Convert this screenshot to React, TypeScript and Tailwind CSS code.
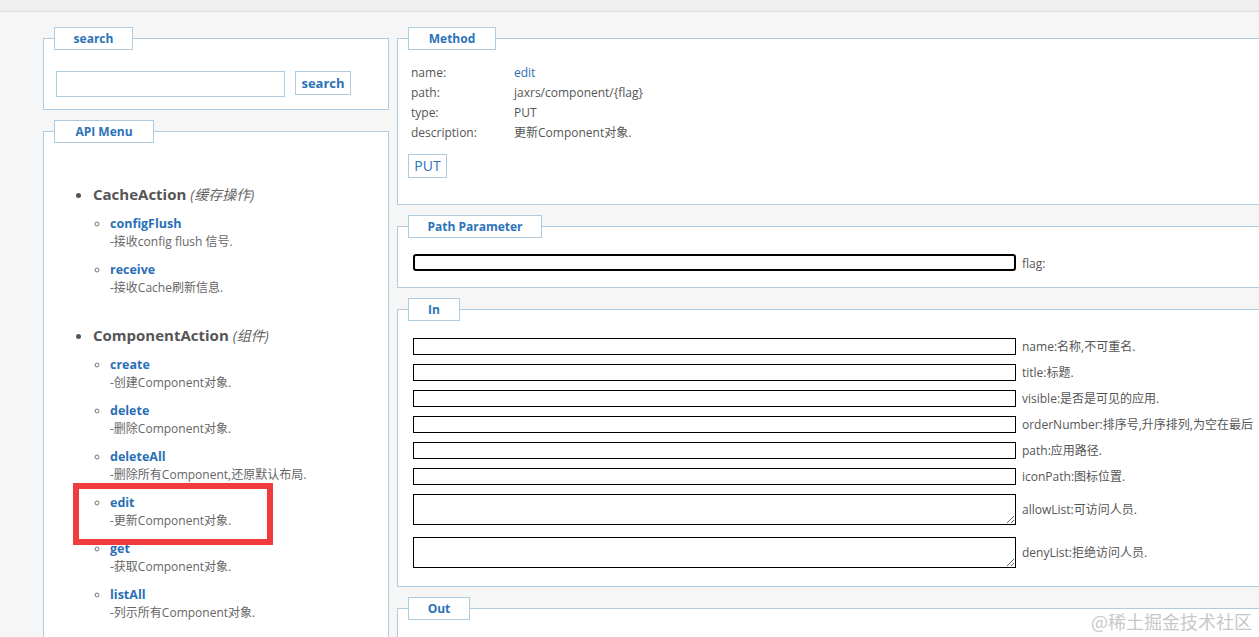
import React from "react";

const groups = [
  {
    name: "CacheAction",
    note: "(缓存操作)",
    items: [
      { name: "configFlush", desc: "-接收config flush 信号." },
      { name: "receive", desc: "-接收Cache刷新信息." },
    ],
  },
  {
    name: "ComponentAction",
    note: "(组件)",
    items: [
      { name: "create", desc: "-创建Component对象." },
      { name: "delete", desc: "-删除Component对象." },
      { name: "deleteAll", desc: "-删除所有Component,还原默认布局." },
      { name: "edit", desc: "-更新Component对象." },
      { name: "get", desc: "-获取Component对象." },
      { name: "listAll", desc: "-列示所有Component对象." },
    ],
  },
];

const methodRows = [
  { label: "name:", value: "edit", link: true },
  { label: "path:", value: "jaxrs/component/{flag}" },
  { label: "type:", value: "PUT" },
  { label: "description:", value: "更新Component对象." },
];

const inFields = [
  { label: "name:名称,不可重名.", area: false },
  { label: "title:标题.", area: false },
  { label: "visible:是否是可见的应用.", area: false },
  { label: "orderNumber:排序号,升序排列,为空在最后", area: false },
  { label: "path:应用路径.", area: false },
  { label: "iconPath:图标位置.", area: false },
  { label: "allowList:可访问人员.", area: true },
  { label: "denyList:拒绝访问人员.", area: true },
];

function Box({
  title,
  legendW,
  className,
  children,
}: {
  title: string;
  legendW: string;
  className?: string;
  children: React.ReactNode;
}) {
  return (
    <fieldset className={`border border-[#aecbe0] bg-white px-[10px] ${className ?? ""}`}>
      <legend className="border border-[#aecbe0] bg-white">
        <span
          className={`block h-[21px] text-center text-[12px] font-bold leading-[21px] text-[#2c72b9] ${legendW}`}
        >
          {title}
        </span>
      </legend>
      {children}
    </fieldset>
  );
}

export default function App() {
  return (
    <div className="relative h-[637px] w-full overflow-hidden bg-[#f6f6f6] font-['Open_Sans','Noto_Sans_CJK_SC',sans-serif] text-[12px] text-[#555]">
      <div className="h-[12px] border-b border-[#dcdcdc] bg-[#efefef]" />

      <div className="flex gap-[8px] pl-[43px] pt-[15px]">
        {/* left column */}
        <div className="flex w-[346px] shrink-0 flex-col">
          <Box title="search" legendW="w-[77px]" className="pb-[12px]">
            <div className="ml-[2px] mt-[21px] flex items-start gap-[10px]">
              <input className="h-[26px] w-[229px] border border-[#aecbe0] bg-white" />
              <button className="h-[24px] w-[56px] border border-[#aecbe0] bg-white text-[13px] font-bold leading-[22px] text-[#2c72b9]">
                search
              </button>
            </div>
          </Box>

          <Box title="API Menu" legendW="w-[98px]" className="mt-[10px] h-[560px]">
            <ul className="mt-[40px] list-disc pl-[39px]">
              {groups.map((g) => (
                <li key={g.name} className="mb-[17px] text-[15px] font-bold leading-[22px] text-[#555]">
                  {g.name}{" "}
                  <i className="text-[14px] font-normal text-[#666]">{g.note}</i>
                  <ul className="mt-[9px] list-[circle] pl-[17px] font-normal">
                    {g.items.map((it) => (
                      <li key={it.name} className="pb-[10px] text-[12px] leading-[18px] text-[#777]">
                        <a className="block text-[12.5px] font-bold text-[#2a6fb6]">{it.name}</a>
                        <span className="block text-[#666]">{it.desc}</span>
                      </li>
                    ))}
                  </ul>
                </li>
              ))}
            </ul>
          </Box>
        </div>

        {/* right column */}
        <div className="flex w-[1000px] shrink-0 flex-col">
          <Box title="Method" legendW="w-[86px]" className="pb-[26px]">
            <div className="ml-[3px] mt-[13px]">
              {methodRows.map((r) => (
                <div key={r.label} className="flex h-[20px] leading-[20px]">
                  <span className="w-[103px]">{r.label}</span>
                  <span className={r.link ? "text-[#2a6fb6]" : ""}>{r.value}</span>
                </div>
              ))}
            </div>
            <button className="mt-[11px] h-[24px] w-[39px] border border-[#aecbe0] bg-white text-[14px] leading-[22px] text-[#2c72b9]">
              PUT
            </button>
          </Box>

          <Box title="Path Parameter" legendW="w-[132px]" className="mt-[10px] pb-[16px]">
            <div className="ml-[5px] mt-[16px] flex items-center">
              <input className="h-[17px] w-[603px] rounded-[3px] border-2 border-black bg-white" />
              <span className="ml-[6px] mt-[3px] leading-[14px]">flag:</span>
            </div>
          </Box>

          <Box title="In" legendW="w-[50px]" className="mt-[10px] pb-[18px]">
            <div className="ml-[5px] mt-[17px] flex flex-col gap-[9px]">
              {inFields.map((f, i) => (
                <div key={f.label} className={`flex items-center ${i === 7 ? "mt-[3px]" : ""}`}>
                  {f.area ? (
                    <textarea className="block h-[31px] w-[603px] border border-black bg-white" />
                  ) : (
                    <input className="block h-[17px] w-[603px] border border-black bg-white" />
                  )}
                  <span className="ml-[6px] mt-[1px] leading-[16px]">{f.label}</span>
                </div>
              ))}
            </div>
          </Box>

          <Box title="Out" legendW="w-[60px]" className="mt-[10px] h-[80px]">
            <div />
          </Box>
        </div>
      </div>

      {/* annotation */}
      <div className="absolute left-[73px] top-[483px] h-[62px] w-[200px] border-[6px] border-[#f03c3c]" />

      <div className="absolute bottom-[5px] right-[7px] font-['Noto_Sans_CJK_SC',sans-serif] text-[18px] leading-[22px] text-[#c8c8c8]">
        @稀土掘金技术社区
      </div>
    </div>
  );
}
